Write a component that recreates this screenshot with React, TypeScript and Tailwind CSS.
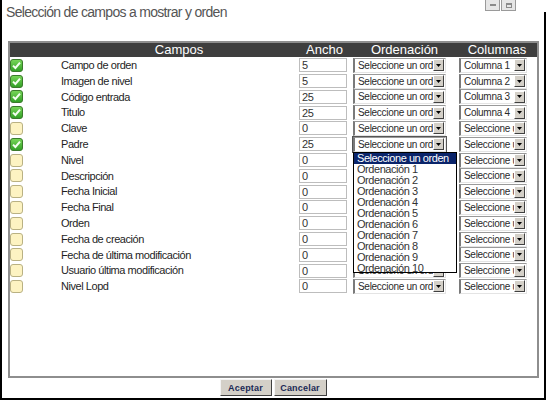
import React from "react";

type Row = { label: string; checked: boolean; width: string; col: string };

const rows: Row[] = [
  { label: "Campo de orden", checked: true, width: "5", col: "Columna 1" },
  { label: "Imagen de nivel", checked: true, width: "5", col: "Columna 2" },
  { label: "Código entrada", checked: true, width: "25", col: "Columna 3" },
  { label: "Titulo", checked: true, width: "25", col: "Columna 4" },
  { label: "Clave", checked: false, width: "0", col: "Seleccione una columna" },
  { label: "Padre", checked: true, width: "25", col: "Seleccione una columna" },
  { label: "Nivel", checked: false, width: "0", col: "Seleccione una columna" },
  { label: "Descripción", checked: false, width: "0", col: "Seleccione una columna" },
  { label: "Fecha Inicial", checked: false, width: "0", col: "Seleccione una columna" },
  { label: "Fecha Final", checked: false, width: "0", col: "Seleccione una columna" },
  { label: "Orden", checked: false, width: "0", col: "Seleccione una columna" },
  { label: "Fecha de creación", checked: false, width: "0", col: "Seleccione una columna" },
  { label: "Fecha de última modificación", checked: false, width: "0", col: "Seleccione una columna" },
  { label: "Usuario última modificación", checked: false, width: "0", col: "Seleccione una columna" },
  { label: "Nivel Lopd", checked: false, width: "0", col: "Seleccione una columna" },
];

const ordenes = [
  "Ordenación 1",
  "Ordenación 2",
  "Ordenación 3",
  "Ordenación 4",
  "Ordenación 5",
  "Ordenación 6",
  "Ordenación 7",
  "Ordenación 8",
  "Ordenación 9",
  "Ordenación 10",
];

function Check({ on }: { on: boolean }) {
  if (!on) {
    return (
      <svg width="13" height="13" viewBox="0 0 13 13">
        <rect x="0.5" y="0.5" width="12" height="12" rx="2.5" fill="#fdf3c2" stroke="#b9b183" />
      </svg>
    );
  }
  return (
    <svg width="13" height="13" viewBox="0 0 13 13">
      <defs>
        <linearGradient id="g" x1="0" y1="0" x2="0" y2="1">
          <stop offset="0" stopColor="#7ad85a" />
          <stop offset="1" stopColor="#2f9e24" />
        </linearGradient>
      </defs>
      <rect x="0.5" y="0.5" width="12" height="12" rx="2.5" fill="url(#g)" stroke="#3b7a2c" />
      <path d="M3 6.6 L5.4 9 L10 3.6" fill="none" stroke="#f4fff0" strokeWidth="2" />
    </svg>
  );
}

function Arrow() {
  return (
    <span className="flex h-[12px] w-[11px] shrink-0 items-center justify-center border border-t-white border-l-white border-r-[#404040] border-b-[#404040] bg-[#d4d0c8]">
      <svg width="5" height="3" viewBox="0 0 5 3">
        <polygon points="0,0 5,0 2.5,3" fill="#000" />
      </svg>
    </span>
  );
}

function Select({ text, w, open }: { text: string; w: string; open?: boolean }) {
  return (
    <div
      className={`flex h-[15px] ${w} items-center border-l-2 border-t border-l-[#7a7a7a] border-t-[#9a9a9a] border-r border-b border-r-[#e4e4e4] border-b-[#e4e4e4] bg-white pr-[1px] ${
        open ? "outline outline-1 outline-[#555]" : ""
      }`}
    >
      <span className="flex-1 overflow-hidden whitespace-nowrap pl-[3px] text-[10px] leading-[13px] tracking-[-0.3px] text-[#2a2a2a]">
        {text}
      </span>
      <Arrow />
    </div>
  );
}

export default function App() {
  return (
    <div
      className="relative flex h-[400px] w-[546px] flex-col border-b-2 border-l-2 border-r-2 border-black bg-white text-[11px] tracking-[-0.45px] text-[#1e1e1e]"
      style={{ fontFamily: '"Liberation Sans", Arial, sans-serif' }}
    >
      {/* gap in right frame next to window buttons */}
      <div className="absolute -right-[2px] top-0 h-[12px] w-[2px] bg-white" />

      {/* title bar */}
      <div className="flex h-[41px] items-start justify-between">
        <div className="pl-[4px] pt-[2px] text-[14px] tracking-[-0.7px] text-[#555]">
          Selección de campos a mostrar y orden
        </div>
        <div className="mr-[28px] flex gap-[1px]">
          <div className="flex h-[11px] w-[15px] items-center justify-center border border-t-0 border-[#9a9a9a] bg-[#e6e6e6]">
            <div className="h-[2px] w-[6px] bg-[#8a8a8a]" />
          </div>
          <div className="flex h-[11px] w-[15px] items-center justify-center border border-t-0 border-[#9a9a9a] bg-[#e6e6e6]">
            <div className="h-[5px] w-[6px] border border-t-2 border-[#8a8a8a]" />
          </div>
        </div>
      </div>

      {/* panel */}
      <div className="ml-[6px] mr-[5px] h-[337px] border-2 border-[#8e8e8e]">
        <div className="grid h-[14px] grid-cols-[51px_236px_55px_105px_80px] bg-[#3e3e3e] text-[13px] leading-[14px] tracking-normal text-white">
          <div />
          <div className="text-center">Campos</div>
          <div className="text-center">Ancho</div>
          <div className="text-center">Ordenación</div>
          <div className="text-center">Columnas</div>
        </div>
        {rows.map((r, i) => (
          <div key={i} className="grid h-[15.8px] grid-cols-[51px_236px_55px_105px_80px] items-center">
            <div>
              <Check on={r.checked} />
            </div>
            <div className="whitespace-nowrap">{r.label}</div>
            <div className="pl-[2px]">
              <div className="h-[14px] w-[48px] border border-[#bdbdbd] pl-[2px] leading-[12px] text-[#333]">{r.width}</div>
            </div>
            <div className="relative pl-[1px]">
              <Select text="Seleccione un orden" w="w-[93px]" open={i === 5} />
              {i === 5 && (
                <div className="absolute left-[1px] top-[15px] z-10 h-[121px] w-[104px] border border-black bg-white text-[#333]">
                  <div className="h-[11px] bg-[#0a246a] pl-[3px] leading-[11px] text-white">Seleccione un orden</div>
                  {ordenes.map((o) => (
                    <div key={o} className="h-[11px] pl-[3px] leading-[11px]">
                      {o}
                    </div>
                  ))}
                </div>
              )}
            </div>
            <div className="pl-[2px]">
              <Select text={r.col} w="w-[68px]" />
            </div>
          </div>
        ))}
      </div>

      {/* buttons */}
      <div className="flex justify-center gap-[2px] pt-[1px]">
        <button className="h-[17px] w-[52px] border border-t-[#f4f4f4] border-l-[#f4f4f4] border-r-[#404040] border-b-[#404040] bg-[#d4d0c8] text-[9px] font-bold leading-[14px] tracking-[0.2px] text-[#1b2a55]">
          Aceptar
        </button>
        <button className="h-[17px] w-[53px] border border-t-[#f4f4f4] border-l-[#f4f4f4] border-r-[#404040] border-b-[#404040] bg-[#d4d0c8] text-[9px] font-bold leading-[14px] tracking-[0.2px] text-[#1b2a55]">
          Cancelar
        </button>
      </div>
    </div>
  );
}
